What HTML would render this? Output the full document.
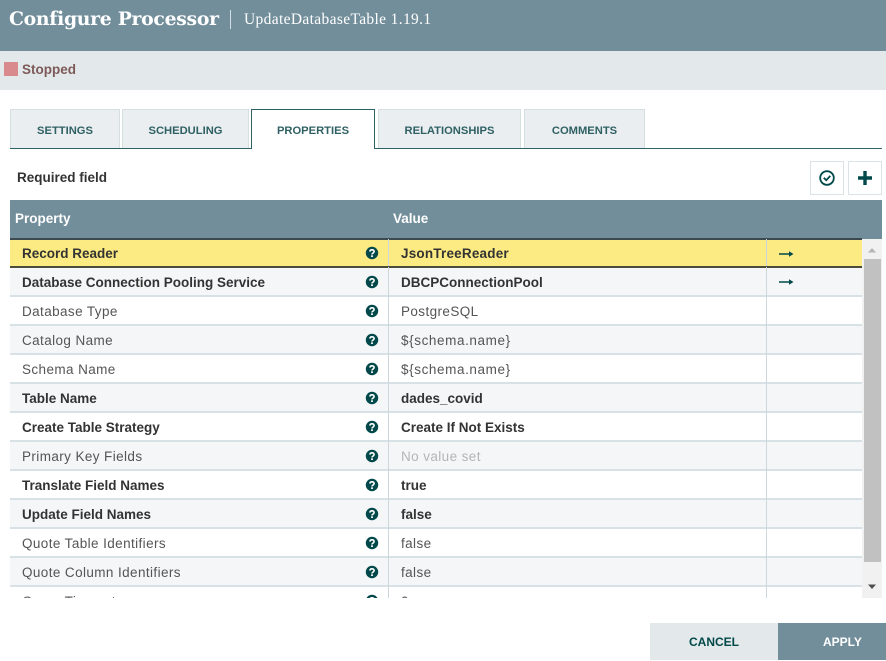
<!DOCTYPE html>
<html><head><meta charset="utf-8">
<style>
*{box-sizing:border-box;margin:0;padding:0}
html,body{width:886px;height:660px;overflow:hidden;background:#fff;font-family:"Liberation Sans",sans-serif;color:#262626}
.a{position:absolute;white-space:nowrap}
.tab{position:absolute;top:109px;height:39px;background:#eaeef0;border:1px solid #d5dee1;border-bottom:none;color:#2f6063;font-size:11.2px;font-weight:bold;text-align:center;line-height:42px}
.row{position:absolute;left:10px;width:852px;height:29px;border-bottom:2px solid #d8e1e6;font-size:13.5px;line-height:29px;color:#555;letter-spacing:.4px}
.g{background:#f4f6f7}
.row b{color:#333;letter-spacing:0}
.row span{position:absolute;left:12px;top:0;white-space:nowrap}
.row i+span{left:391px}
.row svg{position:absolute;left:355px;top:7px}
.row i{position:absolute;left:378px;top:-1px;width:1px;height:30px;background:#ccd6db}
.row u{position:absolute;left:756px;top:-1px;width:1px;height:30px;background:#ccd6db}
</style></head><body>
<svg width="0" height="0" style="position:absolute"><defs>
<symbol id="q" viewBox="0 0 14 14"><circle cx="7" cy="7" r="6.2" fill="#004849"/><path d="M4.9 5.6C5 4.4 5.9 3.8 7 3.800c1.200 0 2.100.7 2.100 1.800 0 1.500-2.100 1.400-2.100 2.900" fill="none" stroke="#fff" stroke-width="1.600"/><rect x="6.100" y="9.300" width="1.800" height="1.700" fill="#fff"/></symbol>
<symbol id="ar" viewBox="0 0 15 8"><path d="M0 4H11" stroke="#004849" stroke-width="1.500"/><path d="M10 1.200L14.500 4L10 6.800Z" fill="#004849"/></symbol>
</defs></svg>

<div class="a" style="left:0;top:0;width:886px;height:51px;background:#728e9b"></div>
<div class="a" style="left:9px;top:4px;font:bold 18.800px/30px 'DejaVu Serif',serif;color:#fff;letter-spacing:-.28px">Configure Processor</div>
<div class="a" style="left:230px;top:10px;width:1px;height:19px;background:#d5dee2"></div>
<div class="a" style="left:244px;top:6px;font:15.500px/28px 'Liberation Serif',serif;color:#fff;letter-spacing:.35px">UpdateDatabaseTable 1.19.1</div>

<div class="a" style="left:0;top:51px;width:886px;height:39px;background:#e3e8eb"></div>
<div class="a" style="left:4px;top:62px;width:14px;height:14px;background:#d98a8c"></div>
<div class="a" style="left:22px;top:62px;font:bold 13.500px/16px 'Liberation Sans',sans-serif;color:#7d5a58">Stopped</div>

<div class="tab" style="left:10px;width:110px">SETTINGS</div>
<div class="tab" style="left:122px;width:127px">SCHEDULING</div>
<div class="tab" style="left:378px;width:143px">RELATIONSHIPS</div>
<div class="tab" style="left:524px;width:121px">COMMENTS</div>
<div class="a" style="left:10px;top:148px;width:872px;height:1px;background:#2d6366"></div>
<div class="tab" style="left:251px;width:124px;height:40px;background:#fff;border:1px solid #2d6366;border-bottom:none;line-height:42px">PROPERTIES</div>

<div class="a" style="left:17px;top:169px;font:bold 13.500px/18px 'Liberation Sans',sans-serif;color:#333">Required field</div>

<div class="a" style="left:810px;top:161px;width:34px;height:34px;background:#fff;border:1px solid #dbe3e6"></div>
<svg class="a" style="left:818px;top:169px" width="18" height="18" viewBox="0 0 18 18"><circle cx="9" cy="9" r="6.800" fill="none" stroke="#004849" stroke-width="1.800"/><path d="M5.800 8.800L8.200 11.200L12.300 6.900" fill="none" stroke="#004849" stroke-width="1.800"/></svg>
<div class="a" style="left:848px;top:161px;width:34px;height:34px;background:#fff;border:1px solid #dbe3e6"></div>
<svg class="a" style="left:857px;top:170px" width="16" height="16" viewBox="0 0 16 16"><path d="M8 1V15M1 8H15" stroke="#004849" stroke-width="3.400"/></svg>

<div class="a" style="left:10px;top:200px;width:872px;height:39px;background:#728e9b"></div>
<div class="a" style="left:15px;top:210px;font:bold 13.500px/18px 'Liberation Sans',sans-serif;color:#fff">Property</div>
<div class="a" style="left:393px;top:210px;font:bold 13.500px/18px 'Liberation Sans',sans-serif;color:#fff">Value</div>

<div style="position:absolute;left:0;top:238px;width:886px;height:360px;overflow:hidden">
<div class="row" style="top:0;height:30px;background:#fceb83;border-top:2px solid #3c4a50;border-bottom:none;line-height:28px"><span><b>Record Reader</b></span><svg width="14" height="14" style="top:6px"><use href="#q"/></svg><i></i><span><b style="letter-spacing:.2px">JsonTreeReader</b></span><u></u><svg width="15" height="8" style="left:769px;top:10px"><use href="#ar"/></svg></div>
<div class="a" style="left:10px;top:28px;width:852px;height:2px;background:#4c4c3c"></div>
<div class="row g" style="top:30px"><span><b>Database Connection Pooling Service</b></span><svg width="14" height="14"><use href="#q"/></svg><i></i><span><b>DBCPConnectionPool</b></span><u></u><svg width="15" height="8" style="left:769px;top:10px"><use href="#ar"/></svg></div>
<div class="row" style="top:59px"><span>Database Type</span><svg width="14" height="14"><use href="#q"/></svg><i></i><span>PostgreSQL</span><u></u></div>
<div class="row g" style="top:88px"><span>Catalog Name</span><svg width="14" height="14"><use href="#q"/></svg><i></i><span style="letter-spacing:.6px">${schema.name}</span><u></u></div>
<div class="row" style="top:117px"><span>Schema Name</span><svg width="14" height="14"><use href="#q"/></svg><i></i><span style="letter-spacing:.6px">${schema.name}</span><u></u></div>
<div class="row g" style="top:146px"><span><b>Table Name</b></span><svg width="14" height="14"><use href="#q"/></svg><i></i><span><b>dades_covid</b></span><u></u></div>
<div class="row" style="top:175px"><span><b>Create Table Strategy</b></span><svg width="14" height="14"><use href="#q"/></svg><i></i><span><b>Create If Not Exists</b></span><u></u></div>
<div class="row g" style="top:204px"><span>Primary Key Fields</span><svg width="14" height="14"><use href="#q"/></svg><i></i><span style="color:#b5b5b5">No value set</span><u></u></div>
<div class="row" style="top:233px"><span><b>Translate Field Names</b></span><svg width="14" height="14"><use href="#q"/></svg><i></i><span><b>true</b></span><u></u></div>
<div class="row g" style="top:262px"><span><b>Update Field Names</b></span><svg width="14" height="14"><use href="#q"/></svg><i></i><span><b>false</b></span><u></u></div>
<div class="row" style="top:291px"><span>Quote Table Identifiers</span><svg width="14" height="14"><use href="#q"/></svg><i></i><span>false</span><u></u></div>
<div class="row g" style="top:320px"><span>Quote Column Identifiers</span><svg width="14" height="14"><use href="#q"/></svg><i></i><span>false</span><u></u></div>
<div class="row" style="top:349px"><span>Query Timeout</span><svg width="14" height="14"><use href="#q"/></svg><i></i><span>0</span><u></u></div>
</div>

<div class="a" style="left:862px;top:239px;width:20px;height:359px;background:#f1f1f1"></div>
<div class="a" style="left:864px;top:259px;width:17px;height:303px;background:#c1c1c1"></div>
<svg class="a" style="left:867px;top:247px" width="10" height="6"><path d="M1 5.500L5 1L9 5.500Z" fill="#b5b5b5"/></svg>
<svg class="a" style="left:867px;top:584px" width="10" height="6"><path d="M1 .5L5 5L9 .5Z" fill="#505050"/></svg>

<div class="a" style="left:650px;top:623px;width:128px;height:37px;background:#e3e8eb;color:#004849;font:bold 12px/38px 'Liberation Sans',sans-serif;text-align:center">CANCEL</div>
<div class="a" style="left:778px;top:623px;width:108px;height:37px;background:#728e9b;color:#fff;font:bold 12px/38px 'Liberation Sans',sans-serif;padding-left:45px">APPLY</div>
</body></html>
